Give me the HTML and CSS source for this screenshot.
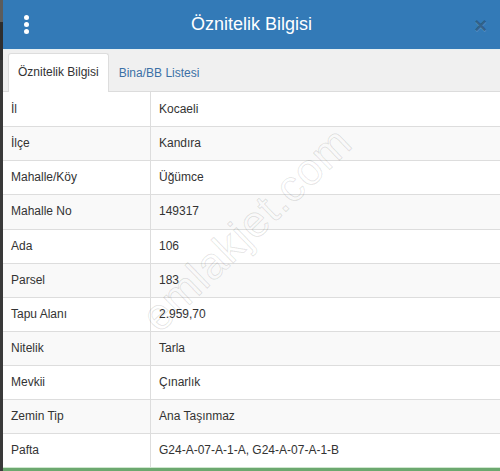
FILE: index.html
```html
<!DOCTYPE html>
<html lang="tr">
<head>
<meta charset="utf-8">
<title>Öznitelik Bilgisi</title>
<link rel="stylesheet" href="styles.css">
</head>
<body>
<div class="strip"></div>
<div class="panel">
  <header class="head">
    <span class="menu"><i></i><i></i><i></i></span>
    <h1 class="title">Öznitelik Bilgisi</h1>
    <span class="close">×</span>
  </header>
  <nav class="tabs">
    <a class="tab active">Öznitelik Bilgisi</a>
    <a class="tab">Bina/BB Listesi</a>
  </nav>
  <div class="body">
    <table class="grid">
      <tbody>
        <tr><td>İl</td><td>Kocaeli</td></tr>
        <tr><td>İlçe</td><td>Kandıra</td></tr>
        <tr><td>Mahalle/Köy</td><td>Üğümce</td></tr>
        <tr><td>Mahalle No</td><td>149317</td></tr>
        <tr><td>Ada</td><td>106</td></tr>
        <tr><td>Parsel</td><td>183</td></tr>
        <tr><td>Tapu Alanı</td><td>2.959,70</td></tr>
        <tr><td>Nitelik</td><td>Tarla</td></tr>
        <tr><td>Mevkii</td><td>Çınarlık</td></tr>
        <tr><td>Zemin Tip</td><td>Ana Taşınmaz</td></tr>
        <tr><td>Pafta</td><td>G24-A-07-A-1-A, G24-A-07-A-1-B</td></tr>
      </tbody>
    </table>
    <div class="watermark">emlakjet.com</div>
  </div>
  <div class="foot"></div>
</div>
</body>
</html>
```
FILE: styles.css
```css
html, body {
  margin: 0;
  padding: 0;
}
body {
  width: 500px;
  height: 471px;
  overflow: hidden;
  display: flex;
  font-family: "Liberation Sans", Arial, sans-serif;
  font-size: 12px;
  color: #333;
  background: #fff;
}
.strip {
  width: 3px;
  flex: none;
  background: linear-gradient(#5c5c5c 0, #5c5c5c 22px, #2e2e2e 22px, #2e2e2e 60px, #3a3a3a 60px);
}
.panel {
  flex: 1;
  display: flex;
  flex-direction: column;
  min-width: 0;
}
.head {
  height: 49px;
  flex: none;
  background: #337ab7;
  display: flex;
  align-items: center;
  position: relative;
}
.menu {
  width: 5px;
  margin-left: 21px;
  display: flex;
  flex-direction: column;
  gap: 2px;
}
.menu i {
  display: block;
  width: 5px;
  height: 5px;
  border-radius: 50%;
  background: #fff;
}
.title {
  flex: 1;
  margin: 0 0 2px 0;
  text-align: center;
  font-size: 18px;
  font-weight: normal;
  color: #fff;
  line-height: 22px;
}
.close {
  margin-right: 13px;
  font-size: 22px;
  font-weight: bold;
  line-height: 1;
  color: rgba(0, 0, 0, 0.28);
  text-shadow: 0 1px 0 rgba(255, 255, 255, 0.15);
  margin-top: 2px;
}
.tabs {
  flex: none;
  display: flex;
  align-items: flex-end;
  gap: 0;
  background: #f0f0f0;
  border-top: 1px solid #e6f0f2;
  border-bottom: 1px solid #dcdcdc;
  padding: 4px 0 0 5px;
  height: 37px;
}
.tab {
  display: block;
  padding: 10px 9px;
  line-height: 17px;
  margin-bottom: -1px;
  border: 1px solid transparent;
  border-bottom: 0;
  border-radius: 3px 3px 0 0;
  color: #3b70a6;
  cursor: pointer;
}
.tab.active {
  background: #fff;
  color: #333;
  border-color: #ddd;
  padding-bottom: 11px;
}
.body {
  flex: 1;
  position: relative;
  overflow: hidden;
}
.grid {
  width: 100%;
  border-collapse: collapse;
}
.grid td {
  padding: 8px;
  line-height: 17.14px;
  border-top: 1px solid #ddd;
  vertical-align: top;
}
.grid tr:first-child td {
  border-top: 0;
  padding-top: 9px;
}
.grid td:first-child {
  width: 131px;
  border-right: 1px solid #ddd;
}
.grid tr:nth-child(even) td {
  background: #f9f9f9;
}
.watermark {
  position: absolute;
  left: 108px;
  top: 112px;
  font-size: 44px;
  letter-spacing: 1px;
  color: rgba(0, 0, 0, 0.02);
  -webkit-text-stroke: 1px rgba(0, 0, 0, 0.11);
  transform: rotate(-44deg);
  transform-origin: center;
  pointer-events: none;
  white-space: nowrap;
}
.foot {
  flex: none;
  height: 3px;
  background: #6ca86f;
  border-top: 1px solid #cfe7cf;
}
```
